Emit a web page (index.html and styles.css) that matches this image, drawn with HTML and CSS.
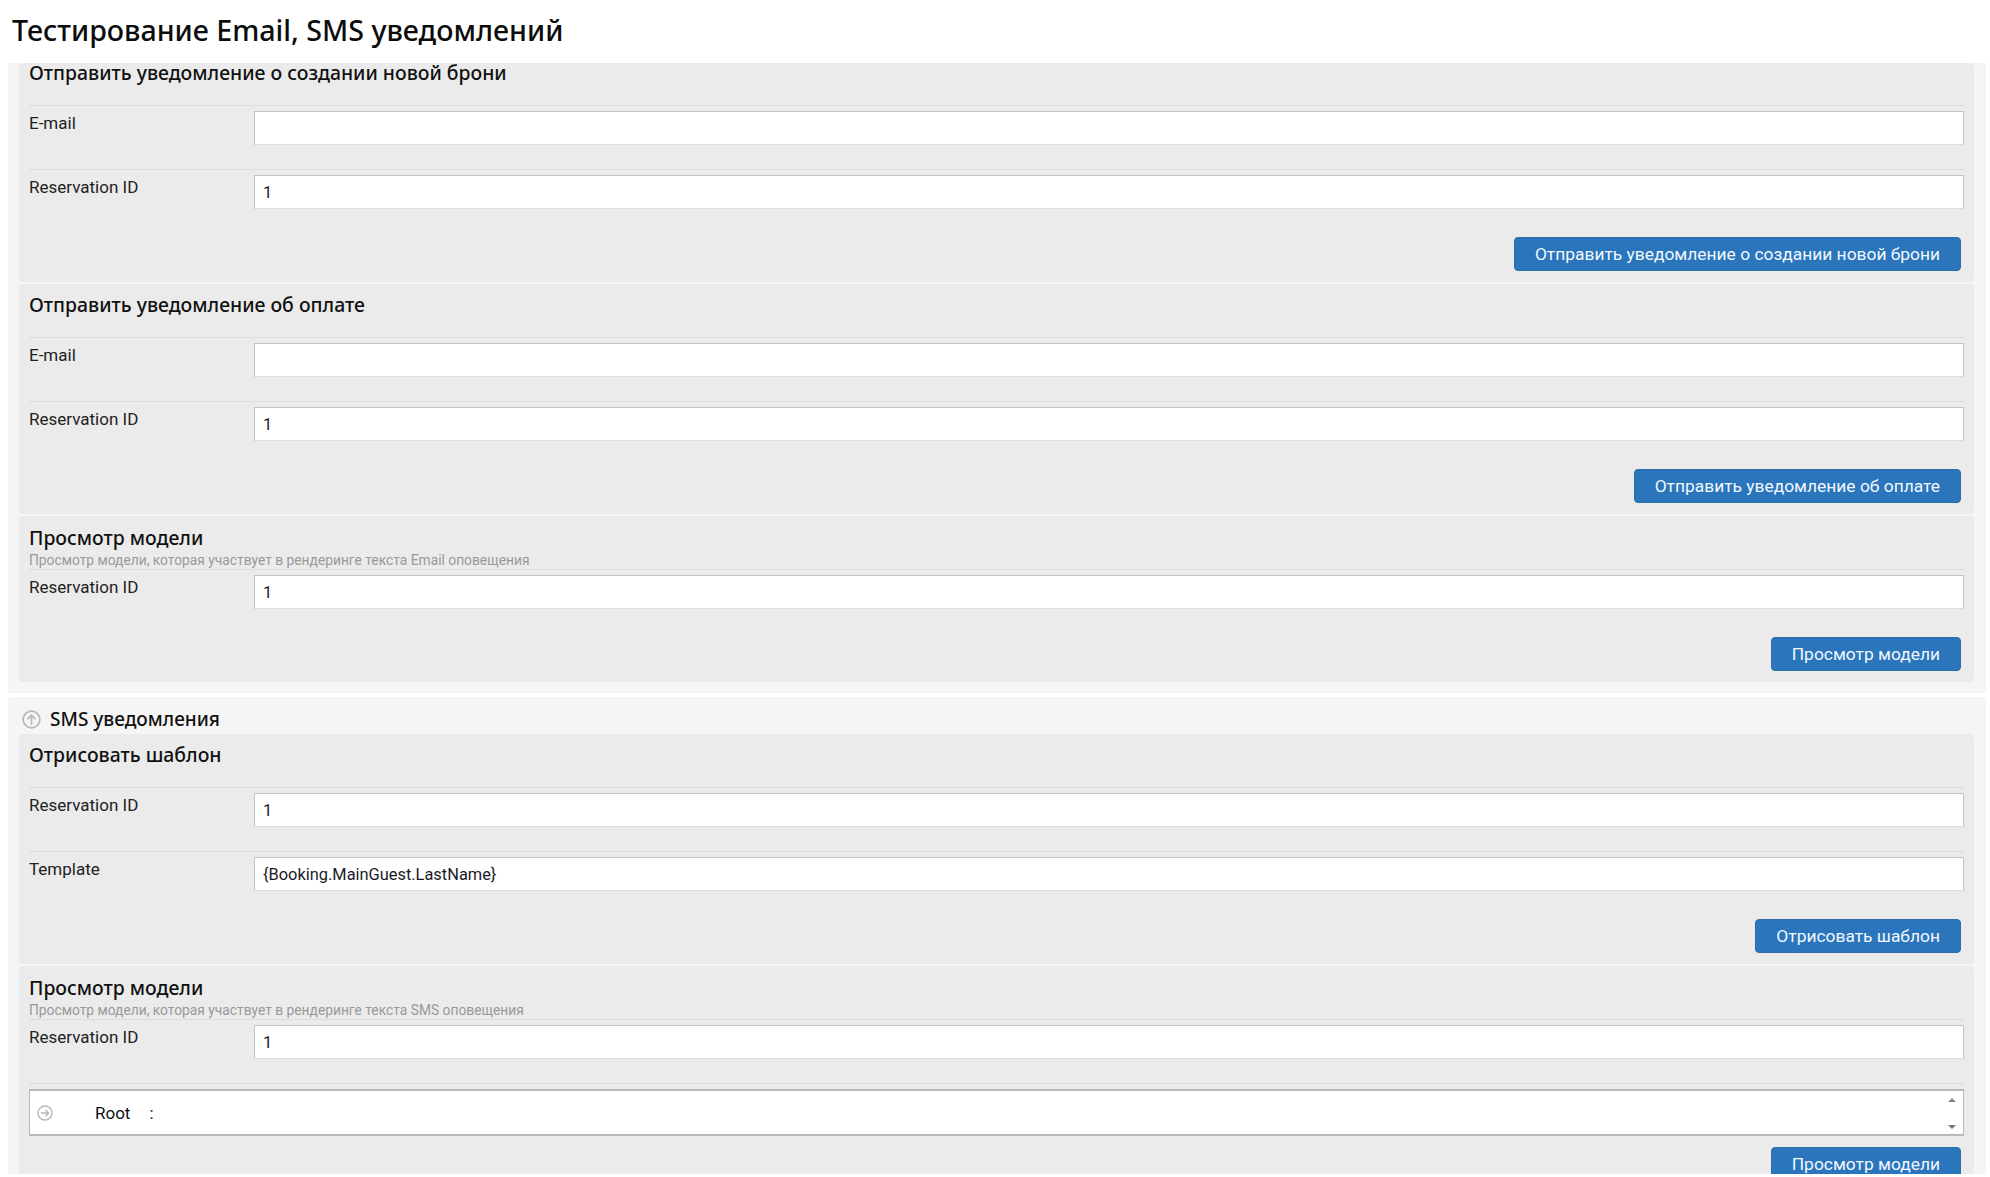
FILE: index.html
```html
<!DOCTYPE html>
<html lang="ru">
<head>
<meta charset="utf-8">
<title>Тестирование Email, SMS уведомлений</title>
<link rel="stylesheet" href="styles.css">
</head>
<body>
<h1 class="page-title">Тестирование Email, SMS уведомлений</h1>

<section class="group group-first">
  <form class="panel">
    <div class="panel-head panel-head-first"><h2>Отправить уведомление о создании новой брони</h2></div>
    <div class="row"><label>E-mail</label><input type="text"></div>
    <div class="row"><label>Reservation ID</label><input type="text" value="1"></div>
    <div class="actions"><button type="button">Отправить уведомление о создании новой брони</button></div>
  </form>
  <form class="panel">
    <div class="panel-head"><h2>Отправить уведомление об оплате</h2></div>
    <div class="row"><label>E-mail</label><input type="text"></div>
    <div class="row"><label>Reservation ID</label><input type="text" value="1"></div>
    <div class="actions"><button type="button">Отправить уведомление об оплате</button></div>
  </form>
  <form class="panel">
    <div class="panel-head panel-head-sub"><h2>Просмотр модели</h2><p>Просмотр модели, которая участвует в рендеринге текста Email оповещения</p></div>
    <div class="row"><label>Reservation ID</label><input type="text" value="1"></div>
    <div class="actions"><button type="button">Просмотр модели</button></div>
  </form>
</section>

<section class="group group-second">
  <div class="group-head">
    <svg class="icon-up" viewBox="0 0 20 20" aria-hidden="true"><circle cx="10" cy="10" r="8.8"/><path d="M10 15.5V5.5M5.8 9.7 10 5.5l4.2 4.2"/></svg>
    <h3>SMS уведомления</h3>
  </div>
  <form class="panel">
    <div class="panel-head"><h2>Отрисовать шаблон</h2></div>
    <div class="row"><label>Reservation ID</label><input type="text" value="1"></div>
    <div class="row"><label>Template</label><input type="text" value="{Booking.MainGuest.LastName}"></div>
    <div class="actions"><button type="button">Отрисовать шаблон</button></div>
  </form>
  <form class="panel">
    <div class="panel-head panel-head-sub"><h2>Просмотр модели</h2><p>Просмотр модели, которая участвует в рендеринге текста SMS оповещения</p></div>
    <div class="row"><label>Reservation ID</label><input type="text" value="1"></div>
    <div class="row row-tree">
      <div class="tree">
        <svg class="icon-right" viewBox="0 0 20 20" aria-hidden="true"><circle cx="10" cy="10" r="8.8"/><path d="M5 10h9.5M10.5 6l4 4-4 4"/></svg>
        <span class="tree-key">Root</span><span class="tree-sep">:</span>
        <div class="scroller"><span class="arrow-up"></span><span class="arrow-down"></span></div>
      </div>
    </div>
    <div class="actions actions-tight"><button type="button">Просмотр модели</button></div>
  </form>
</section>
</body>
</html>
```
FILE: styles.css
```css
* { box-sizing: border-box; }
html { background: #fff; }
body {
  height: 1174px;
  margin: 0;
  overflow: hidden;
  color: #111;
  font-family: Roboto, "Liberation Sans", sans-serif;
  font-size: 16px;
}
.page-title {
  margin: 0;
  height: 63px;
  padding: 11px 0 0 12px;
  font-family: "Noto Sans", sans-serif;
  font-size: 28.6px;
  line-height: 37px;
  font-weight: 500;
  color: #0c0c0c;
}
.group {
  margin: 0 4px 0 8px;
  padding: 0 12px 0 11px;
  background: #f5f5f5;
}
.group-first { height: 630px; margin-bottom: 4px; }
.group-second { height: 480px; border-radius: 3px 3px 0 0; }
.group-head {
  display: flex;
  align-items: center;
  height: 37px;
  margin-left: -11px;
  padding: 7px 0 0 14px;
}
.group-head h3 {
  margin: 0 0 0 9px;
  font-family: "Noto Sans", sans-serif;
  font-size: 19px;
  font-weight: 500;
  line-height: 24px;
}
.icon-up, .icon-right { fill: none; stroke: #b8b8b8; stroke-width: 1.8; flex: none; }
.icon-up { width: 19px; height: 19px; }
.icon-right { width: 16px; height: 16px; }
.panel {
  display: block;
  margin-bottom: 2px;
  padding: 0 10px 11px 10px;
  background: #ebebeb;
  border-radius: 3px;
}
.panel-head {
  height: 53px;
  padding-top: 8px;
}
.panel-head-sub { padding-top: 9px; }
.panel-head-first { height: 42px; padding-top: 0; }
.panel-head h2 {
  margin: 0;
  font-family: "Noto Sans", sans-serif;
  font-size: 19.4px;
  line-height: 25px;
  font-weight: 500;
  color: #111;
}
.panel-head-first h2 { line-height: 20px; }
.panel-head p {
  margin: 1px 0 0;
  font-size: 13.8px;
  line-height: 19px;
  color: #999;
}
.row {
  display: flex;
  height: 64px;
  padding-top: 5px;
  border-top: 1px solid #dcdcdc;
}
.row label {
  flex: none;
  width: 225px;
  line-height: 22px;
  padding-top: 1px;
  font-size: 17px;
  color: #222;
}
.row input {
  flex: 1;
  min-width: 0;
  height: 34px;
  padding: 0 8px;
  border: 1px solid #c4c4c4;
  border-bottom-color: #ddd;
  border-radius: 0;
  background: #fff;
  font-family: Roboto, sans-serif;
  font-size: 16.4px;
  color: #1a1a2a;
  outline: none;
}
.row-tree { height: 59px; }
.tree {
  display: flex;
  align-items: center;
  flex: 1;
  height: 47px;
  padding-left: 7px;
  position: relative;
  background: #fff;
  border: 1px solid #b9b9b9;
  border-top-width: 2px;
  border-bottom-width: 2px;
}
.tree-key { margin-left: 42px; font-size: 17px; }
.tree-sep { margin-left: 19px; font-size: 17px; }
.scroller {
  position: absolute;
  top: 0;
  right: 7px;
  bottom: 0;
  display: flex;
  flex-direction: column;
  justify-content: space-between;
  padding: 7px 0 5px;
}
.arrow-up, .arrow-down { display: block; width: 0; height: 0; border-left: 4px solid transparent; border-right: 4px solid transparent; }
.arrow-up { border-bottom: 4px solid #888; }
.arrow-down { border-top: 4px solid #777; }
.actions {
  display: flex;
  justify-content: flex-end;
  align-items: flex-end;
  height: 74px;
  margin-top: -36px;
  padding-right: 3px;
}
.actions-tight { margin-top: 5px; height: auto; }
.actions button {
  height: 34px;
  padding: 1px 20px 0;
  background: #2a75bb;
  border: 1px solid #2e6da4;
  border-radius: 4px;
  color: #f2f8ff;
  font-family: Roboto, sans-serif;
  font-size: 17.4px;
  line-height: 1;
}
```
